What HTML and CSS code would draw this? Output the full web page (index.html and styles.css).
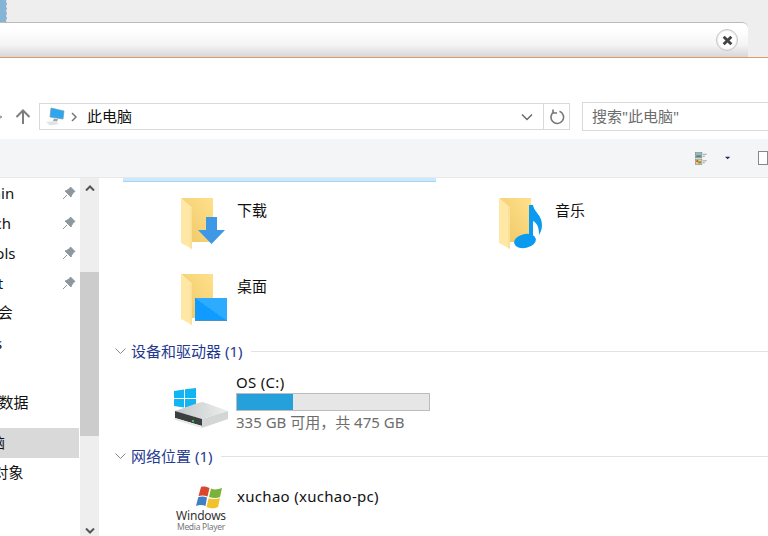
FILE: index.html
```html
<!DOCTYPE html>
<html>
<head>
    <title>此电脑</title>
    <link rel="stylesheet" href="styles.css">
</head>
<body>

    <svg class="defs" width="0" height="0">
        <defs>
            <linearGradient id="folderBack" x1="0" y1="1" x2="1" y2="0">
                <stop offset="0" stop-color="#eec765"/>
                <stop offset="1" stop-color="#ffe08c"/>
            </linearGradient>
            <linearGradient id="screenFill" x1="0" y1="1" x2="1" y2="0">
                <stop offset="0.5" stop-color="#0f9bff"/>
                <stop offset="0.5" stop-color="#2cabff"/>
            </linearGradient>
            <linearGradient id="driveTop" x1="0" y1="0" x2="1" y2="0">
                <stop offset="0" stop-color="#c4c7c7"/>
                <stop offset="1" stop-color="#eceeee"/>
            </linearGradient>
            <symbol id="folder" viewBox="0 0 47 52">
                <path d="M1 1H33V45H12V11Z" fill="url(#folderBack)"/>
                <path d="M1 1L12 11V52L1 46Z" fill="#ffe8a6"/>
                <path d="M12 11V52L10 51V10Z" fill="#fbe09a"/>
            </symbol>
            <symbol id="pin" viewBox="0 0 14 14">
                <path d="M8.500 1L13 5.500L11.500 6.300L9.500 9.500L9 11L3 5L4.500 4.500L7.700 2.500ZM5 9L1 13" fill="#8d979e" stroke="#8d979e"/>
            </symbol>
        </defs>
    </svg>

    <div class="tabstrip">
        <div class="tab-edge"></div>
    </div>

    <div class="notice">
        <div class="notice-bar">
            <div class="close-btn">
                <svg width="11" height="11" viewBox="0 0 10 10"><path d="M1.500 1.500L8.500 8.500M8.500 1.500L1.500 8.500" stroke="#444" stroke-width="2.600"/></svg>
            </div>
        </div>
    </div>

    <div class="address-row">
        <svg class="back-tip" width="4" height="8" viewBox="0 0 4 8"><path d="M0 4H4M0 4L2 2M0 4L2 6" stroke="#888" stroke-width="1.600" fill="none" transform="translate(-1 0)"/></svg>
        <svg class="up-arrow" width="16" height="16" viewBox="0 0 16 16"><path d="M8 15V2M1.500 8L8 1.500L14.500 8" stroke="#7d7d7d" stroke-width="2" fill="none"/></svg>
        <div class="address-box">
            <svg class="pc-icon" width="20" height="20" viewBox="0 0 20 20">
                <path d="M6 1L19 4L18 12L5 10Z" fill="#2ea6ef" stroke="#6f9ab8" stroke-width="0.700"/>
                <path d="M9 11.500L13 12.300L12 14.500L8 14Z" fill="#9aa5ad"/>
                <path d="M1 15L10 14L14 17L5 18.500Z" fill="#dfe3e6"/>
            </svg>
            <svg class="crumb" width="6" height="10" viewBox="0 0 6 10"><path d="M1 1L5 5L1 9" stroke="#777" stroke-width="1.500" fill="none"/></svg>
            <span class="crumb-text">此电脑</span>
            <svg class="drop" width="12" height="8" viewBox="0 0 12 8"><path d="M1 1.500L6 6.500L11 1.500" stroke="#666" stroke-width="1.400" fill="none"/></svg>
            <div class="refresh">
                <svg width="16" height="16" viewBox="0 0 16 16"><path d="M5 2.800A6.300 6.300 0 1 0 10.500 2.300M4 0.500V4H8" stroke="#777" stroke-width="1.600" fill="none"/></svg>
            </div>
        </div>
        <div class="search-box">搜索"此电脑"</div>
    </div>

    <div class="toolbar">
        <svg class="view-icon" width="18" height="19" viewBox="0 0 18 19">
            <rect x="0.500" y="0.500" width="10" height="8" fill="#8fb8c9" stroke="#8a8a8a"/>
            <rect x="2" y="5" width="7" height="2" fill="#4a7a50"/>
            <rect x="0.500" y="10.500" width="10" height="8" fill="#e8d27a" stroke="#8a8a8a"/>
            <rect x="2" y="12" width="3" height="3" fill="#c8503c"/>
            <rect x="5" y="14" width="4" height="3" fill="#4f9a50"/>
            <path d="M12 3H18M12 6H15M12 13H18M12 16H15" stroke="#777"/>
        </svg>
        <svg class="view-drop" width="8" height="4" viewBox="0 0 8 4"><path d="M0 0H8L4 4Z" fill="#1c2f55"/></svg>
        <div class="pane-icon"></div>
    </div>

    <div class="main">
        <div class="sidebar">
            <div class="nav-item nav-l1"><span>Main</span><svg class="pin" width="14" height="14"><use href="#pin"/></svg></div>
            <div class="nav-item nav-l1"><span>Arch</span><svg class="pin" width="14" height="14"><use href="#pin"/></svg></div>
            <div class="nav-item nav-l1"><span>Tools</span><svg class="pin" width="14" height="14"><use href="#pin"/></svg></div>
            <div class="nav-item nav-l1"><span>Bot</span><svg class="pin" width="14" height="14"><use href="#pin"/></svg></div>
            <div class="nav-item nav-l1 nav-cjk"><span>i大会</span></div>
            <div class="nav-item nav-l1"><span>Sys</span></div>
            <div class="nav-item"></div>
            <div class="nav-item nav-l1 nav-cjk"><span>3D数据</span></div>
            <div class="nav-gap"></div>
            <div class="nav-item nav-l0 nav-cjk selected"><span>此电脑</span></div>
            <div class="nav-item nav-obj nav-cjk"><span>3D对象</span></div>
        </div>
        <div class="scrollbar">
            <div class="scroll-track">
                <svg class="scroll-up" width="10" height="6" viewBox="0 0 10 6"><path d="M1 5.500L5 1.500L9 5.500" stroke="#555" stroke-width="2" fill="none"/></svg>
            </div>
            <div class="scroll-thumb"></div>
            <div class="scroll-track scroll-end">
                <svg width="10" height="6" viewBox="0 0 10 6"><path d="M1 0.500L5 4.500L9 0.500" stroke="#555" stroke-width="2" fill="none"/></svg>
            </div>
        </div>
        <div class="content">
            <div class="selected-strip"></div>

            <div class="folders">
                <div class="folder-item">
                    <svg class="big-icon" width="47" height="52" viewBox="0 0 47 52">
                        <use href="#folder"/>
                        <path d="M26 20H37V33H45L31.500 47L18 33H26Z" fill="#3f98e6"/>
                    </svg>
                    <span class="folder-name">下载</span>
                </div>
                <div class="folder-item">
                    <svg class="big-icon" width="47" height="52" viewBox="0 0 47 52">
                        <use href="#folder"/>
                        <ellipse cx="27" cy="44" rx="11" ry="7" fill="#0a9bf0" transform="rotate(-12 27 44)"/>
                        <path d="M31 8H35C36 15 44 18 44 28C44 33 42 36 41 38C41 30 39 26 35 24V44H31Z" fill="#0a9bf0"/>
                    </svg>
                    <span class="folder-name">音乐</span>
                </div>
                <div class="folder-item">
                    <svg class="big-icon" width="47" height="52" viewBox="0 0 47 52">
                        <use href="#folder"/>
                        <rect x="15" y="25" width="32" height="23" fill="url(#screenFill)"/>
                        <rect x="15" y="47" width="32" height="1" fill="#4a8fbf"/>
                    </svg>
                    <span class="folder-name">桌面</span>
                </div>
            </div>

            <div class="group-head">
                <svg width="11" height="7" viewBox="0 0 11 7"><path d="M0.500 0.500L5.500 5.500L10.500 0.500" stroke="#888" fill="none"/></svg>
                <span class="group-title">设备和驱动器 (1)</span>
                <div class="group-line"></div>
            </div>

            <div class="drive">
                <svg class="drive-icon" width="54" height="41" viewBox="0 0 54 41">
                    <path d="M0 3L10 1.500V10H0ZM11 1.300L22 0V10H11ZM0 11H10V19.500L0 18ZM11 11H22V21L11 19.700Z" fill="#12b5f2"/>
                    <path d="M1 23L24 15L29 14L54 23L28 31Z" fill="url(#driveTop)"/>
                    <path d="M1 23L28 31V38L1 30Z" fill="#3c3f40"/>
                    <path d="M28 31L54 23V31L28 40Z" fill="#d4d6d6"/>
                    <path d="M1 30L28 38V40L1 32Z" fill="#e8e8e8"/>
                    <rect x="18" y="32" width="2" height="2" fill="#35c24a"/>
                </svg>
                <div class="drive-info">
                    <div class="item-name">OS (C:)</div>
                    <div class="usage"><div class="usage-fill"></div></div>
                    <div class="usage-text">335 GB 可用，共 475 GB</div>
                </div>
            </div>

            <div class="group-head group-net">
                <svg width="11" height="7" viewBox="0 0 11 7"><path d="M0.500 0.500L5.500 5.500L10.500 0.500" stroke="#888" fill="none"/></svg>
                <span class="group-title">网络位置 (1)</span>
                <div class="group-line"></div>
            </div>

            <div class="net-item">
                <div class="wmp">
                    <svg width="26" height="23" viewBox="0 0 26 23">
                        <path d="M5 1C8 0 11 1 13.500 2L11.500 10.500C9 9.500 6 9 2.500 10Z" fill="#d8472e"/>
                        <path d="M15 2.500C18 4 22 3.500 26 2L24 11C21 12.500 16.500 12 13 11Z" fill="#7bb33a"/>
                        <path d="M2.300 11C6 10 8.500 10.500 11 11.500L9.500 20C7 19 3.500 18.500 0 20Z" fill="#3f7fc4"/>
                        <path d="M12.500 12.500C16 13 20.500 13.500 24 12L22 21C19 23 14 22.500 10.500 21Z" fill="#f2c22e"/>
                    </svg>
                    <span class="wmp-name">Windows</span>
                    <span class="wmp-sub">Media Player</span>
                </div>
                <div class="item-name">xuchao (xuchao-pc)</div>
            </div>
        </div>
    </div>

</body>
</html>
```

FILE: styles.css
```css
html, body { margin: 0; padding: 0; height: 536px; overflow: hidden; }
body { background-color: #fff; color: #111; font-family: "Noto Sans", "Noto Sans CJK SC", sans-serif; font-size: 15px; width: 768px; }
.defs { display: block; }

.tabstrip { height: 22px; background-color: #eee; display: flex; }
.tab-edge { width: 6px; background-color: #85b4d4; border-right: 1px dashed #ddd; }

.notice { height: 35px; background-color: #eee; border-bottom: 1px solid #dc9a70; }
.notice-bar { width: 748px; height: 35px; background: linear-gradient(#fff 20%, #f4f4f4 65%, #d6d6d6); border-top: 1px solid #bbb; border-radius: 0 6px 0 0; display: flex; justify-content: flex-end; align-items: center; padding-right: 10px; box-sizing: border-box; }
.close-btn { width: 22px; height: 22px; border: 1px solid #c4c4c4; border-radius: 50%; background-color: #fff; display: flex; align-items: center; justify-content: center; box-shadow: inset 0 0 2px #ccc; box-sizing: border-box; }

.address-row { height: 81px; display: flex; align-items: flex-start; padding-top: 44px; box-sizing: border-box; }
.back-tip { margin: 11px 0 0 -1px; flex-shrink: 0; }
.up-arrow { margin: 7px 0 0 12px; flex-shrink: 0; }
.address-box { width: 531px; height: 27px; margin: 1px 0 0 8px; border: 1px solid #d9d9d9; box-sizing: border-box; display: flex; align-items: center; flex-shrink: 0; }
.pc-icon { margin-left: 5px; }
.crumb { margin-left: 6px; }
.crumb-text { margin: 0 0 2px 10px; flex: 1; }
.drop { margin-right: 5px; }
.refresh { width: 25px; height: 25px; margin-left: 5px; border-left: 1px solid #d9d9d9; display: flex; align-items: center; justify-content: center; }
.search-box { width: 200px; height: 29px; margin-left: 12px; border: 1px solid #d9d9d9; box-sizing: border-box; padding-left: 9px; color: #6d6d6d; line-height: 27px; flex-shrink: 0; white-space: nowrap; }

.toolbar { height: 38px; background-color: #f4f5f7; border-bottom: 1px solid #e8e8e8; display: flex; align-items: center; padding-left: 695px; }
.view-drop { margin-left: 18px; }
.pane-icon { width: 8px; height: 12px; margin-left: 28px; border: 1px solid #888; background-color: #fff; flex-shrink: 0; }

.main { display: flex; height: 358px; }
.sidebar { width: 80px; overflow: hidden; flex-shrink: 0; }
.nav-item { height: 30px; width: 79px; display: flex; align-items: center; white-space: nowrap; position: relative; }
.nav-l1 span { margin-left: -21px; }
.nav-l0 span { margin-left: -40px; }
.nav-obj span { margin-left: -26px; }
.nav-cjk span { margin-bottom: 3px; }
.nav-gap { height: 10px; }
.selected { background-color: #d9d9d9; }
.pin { position: absolute; left: 62px; top: 8px; }

.scrollbar { width: 19px; display: flex; flex-direction: column; background-color: #eee; flex-shrink: 0; }
.scroll-track { height: 94px; display: flex; justify-content: center; padding-top: 7px; box-sizing: border-box; }
.scroll-thumb { height: 164px; background-color: #ccc; }
.scroll-end { height: 100px; padding-top: 92px; }

.content { flex: 1; min-width: 0; }
.selected-strip { width: 313px; height: 3px; margin-left: 24px; background-color: #cce8ff; border-bottom: 1px solid #a6d4f5; }

.folders { display: grid; grid-template-columns: 318px 1fr; grid-auto-rows: 76px; margin: 15px 0 0 81px; height: 152px; }
.folder-item { display: flex; }
.big-icon { flex-shrink: 0; }
.folder-name { margin: 2px 0 0 10px; line-height: 22px; height: 22px; }

.group-head { display: flex; align-items: center; height: 20px; margin: -8px 0 0 16px; }
.group-title { margin: 0 0 2px 5px; color: #1f3a8f; white-space: nowrap; }
.group-line { flex: 1; height: 1px; margin-left: 9px; background-color: #e2e2e2; }

.drive { display: flex; margin: 11px 0 0 75px; height: 71px; }
.drive-icon { margin-top: 16px; flex-shrink: 0; }
.drive-info { margin-left: 8px; width: 194px; }
.item-name { line-height: 21px; letter-spacing: 0.3px; white-space: nowrap; }
.usage { width: 194px; height: 18px; background-color: #e6e6e6; border: 1px solid #bcbcbc; box-sizing: border-box; }
.usage-fill { width: 56px; height: 16px; background-color: #26a0da; }
.usage-text { color: #6d6d6d; line-height: 22px; white-space: nowrap; }

.group-net { margin-top: 3px; }

.net-item { display: flex; margin: 20px 0 0 77px; }
.wmp { width: 50px; margin-right: 11px; display: flex; flex-direction: column; align-items: center; color: #333; flex-shrink: 0; }
.wmp svg { margin-left: 16px; }
.wmp-name { font-size: 12px; line-height: 13px; letter-spacing: -0.2px; }
.wmp-sub { font-size: 8.500px; line-height: 10px; color: #777; white-space: nowrap; letter-spacing: -0.3px; }
```
